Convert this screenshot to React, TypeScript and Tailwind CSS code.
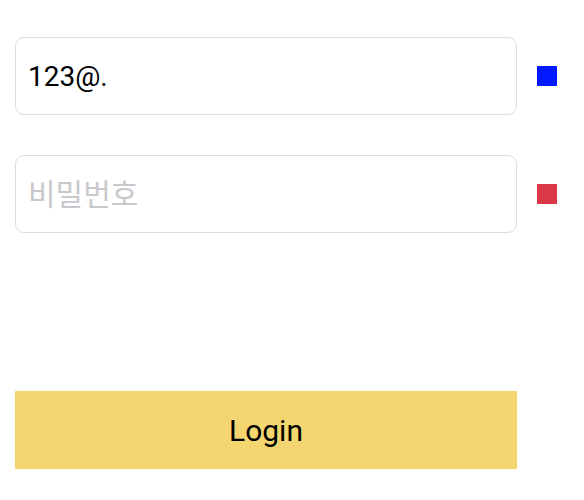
export default function App() {
    return (
        <div className="w-[584px] h-[500px] bg-white pl-[15px] pt-[37px]" style={{ fontFamily: "Roboto, 'Noto Sans CJK KR', sans-serif" }}>
            {/* Email row */}
            <div className="flex items-center gap-[20px]">
                <input
                    defaultValue="123@."
                    className="w-[502px] h-[78px] rounded-[9px] border border-[#dcdcdc] px-[12px] text-[28px] text-black outline-none"
                />
                <div className="w-[20px] h-[20px] bg-[#0019ff]" />
            </div>

            {/* Password row */}
            <div className="flex items-center gap-[20px] mt-[40px]">
                <input
                    type="text"
                    placeholder="비밀번호"
                    className="w-[502px] h-[78px] rounded-[9px] border border-[#dcdcdc] px-[12px] text-[30px] text-black outline-none placeholder:text-[#c8c8cc]"
                />
                <div className="w-[20px] h-[20px] bg-[#d93947]" />
            </div>

            <button className="mt-[158px] w-[502px] h-[78px] bg-[#f3d66f] text-[30px] text-black">
                Login
            </button>
        </div>
    );
}
